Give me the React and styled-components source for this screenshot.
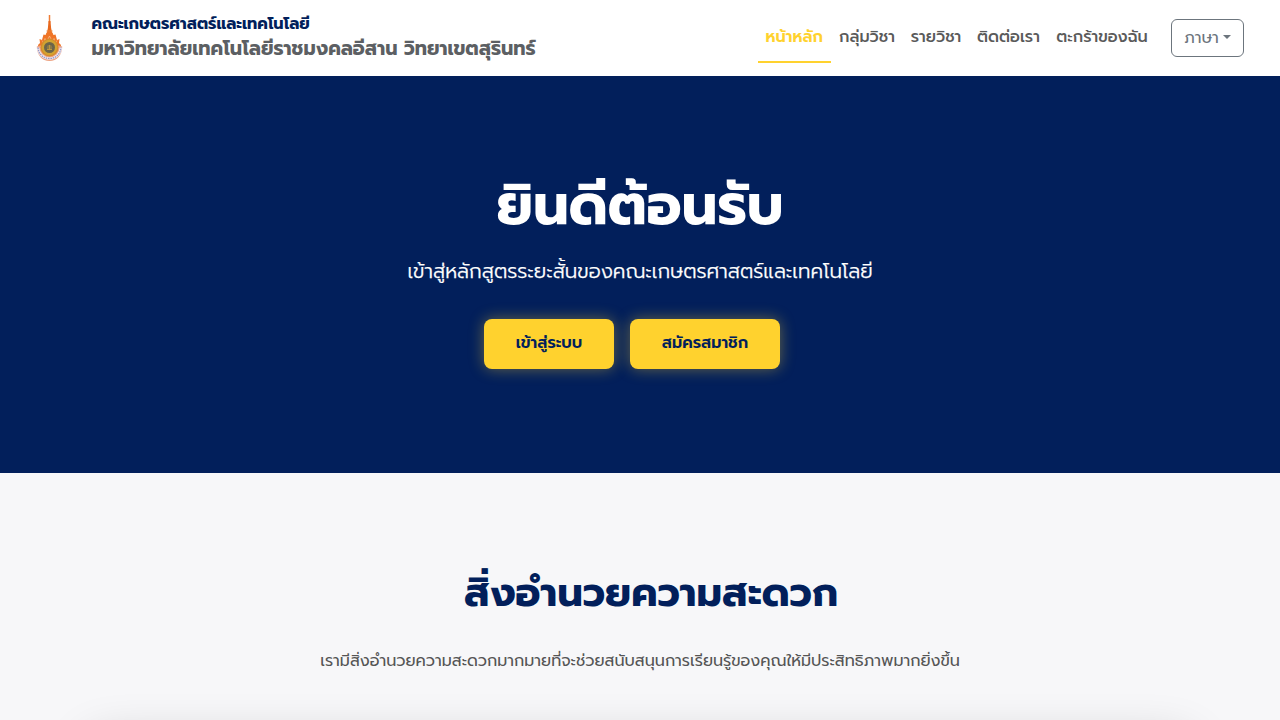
import React from "react";
import styled, { createGlobalStyle } from "styled-components";

const GlobalStyle = createGlobalStyle`
  * { box-sizing: border-box; }
  html, body { margin: 0; height: 720px; overflow: hidden; }
  body { font-family: Prompt, Kanit, "Noto Sans Thai", "Noto Sans", "Liberation Sans", sans-serif; background: #f7f7f9; }
  h1, h2, p { margin: 0; }
`;

const Page = styled.div`
  width: 1280px;
  height: 720px;
  overflow: hidden;
`;

const Header = styled.header`
  height: 76px;
  padding: 0 36px;
  display: flex;
  justify-content: space-between;
  background: #fff;
`;

const Brand = styled.a`
  display: flex;
  padding-top: 13px;
`;

const Crest = styled.svg`
  width: 27px;
  height: 50px;
  margin-right: 28.6px;
`;

const BrandText = styled.div`
  display: flex;
  flex-direction: column;
  padding-top: 1px;
`;

const Text = styled.span`
  display: block;
  white-space: nowrap;
`;

const Faculty = styled(Text)`
  font-size: 16px;
  line-height: 20px;
  font-weight: 700;
  color: #021f5b;
`;

const University = styled(Text)`
  font-size: 19.2px;
  line-height: 29px;
  font-weight: 700;
  color: #5c5f63;
`;

const Nav = styled.nav`
  display: flex;
  align-items: flex-start;
`;

const NavLink = styled.a`
  width: ${(p) => p.$width}px;
  height: 50px;
  margin-top: 13px;
  display: flex;
  justify-content: center;
  font-size: 16px;
  line-height: 48px;
  font-weight: ${(p) => (p.$active ? 600 : 500)};
  color: ${(p) => (p.$active ? "#ffd22e" : "#5a5a5a")};
  border-bottom: 2px solid ${(p) => (p.$active ? "#ffd22e" : "transparent")};
`;

const LanguageButton = styled.button`
  width: 73px;
  height: 38px;
  margin: 19px 0 0 15px;
  padding: 0;
  display: flex;
  align-items: center;
  justify-content: center;
  gap: 4px;
  font-family: inherit;
  font-size: 16px;
  line-height: 24px;
  color: #6c757d;
  background: transparent;
  border: 1px solid #6c757d;
  border-radius: 6px;
`;

const Caret = styled.span`
  margin-bottom: 2px;
  border: 4px solid transparent;
  border-top-color: currentColor;
  border-bottom: 0;
`;

const Hero = styled.section`
  height: 397px;
  padding-top: 85px;
  display: flex;
  flex-direction: column;
  align-items: center;
  background: #021f5b;
`;

const HeroTitle = styled.h1`
  height: 90px;
  font-size: 56px;
  line-height: 90px;
  font-weight: 700;
  color: #fff;
`;

const HeroLead = styled.p`
  margin-top: 4px;
  height: 32px;
  font-size: 20px;
  line-height: 32px;
  font-weight: 300;
  color: #fff;
  -webkit-text-stroke: 0.25px #fff;
`;

const Actions = styled.div`
  display: flex;
  gap: 16px;
  margin: 32px 16px 0 0;
`;

const ActionButton = styled.button`
  width: ${(p) => p.$width}px;
  height: 50px;
  padding: 0 0 3px;
  display: flex;
  align-items: center;
  justify-content: center;
  font-family: inherit;
  font-size: 16px;
  font-weight: 600;
  color: #021f5b;
  background: #ffd22e;
  border: 0;
  border-radius: 8px;
  box-shadow: 0 0 15px rgba(255, 210, 46, 0.4);
`;

const Facilities = styled.section`
  padding-top: 85px;
  display: flex;
  flex-direction: column;
  align-items: center;
  background: #f7f7f9;
`;

const SectionTitle = styled.h2`
  margin-left: 22px;
  height: 70px;
  font-size: 40px;
  line-height: 70px;
  font-weight: 700;
  color: #021f5b;
`;

const SectionLead = styled.p`
  margin-top: 18px;
  height: 30px;
  font-size: 16px;
  line-height: 30px;
  color: #555;
`;

const Card = styled.div`
  width: 1104px;
  height: 300px;
  margin-top: 48px;
  border-radius: 16px;
  background: #fff;
  box-shadow: 0 16px 48px rgba(0, 0, 0, 0.2);
`;

const NAV = [
  { label: "หน้าหลัก", width: 73.5, active: true },
  { label: "กลุ่มวิชา", width: 72 },
  { label: "รายวิชา", width: 66 },
  { label: "ติดต่อเรา", width: 79 },
  { label: "ตะกร้าของฉัน", width: 108 },
];

function UniversityCrest() {
  return (
    <Crest viewBox="0 0 27 50">
      <path d="M13.5 2v8" stroke="#ef7d35" strokeWidth="1.5" />
      <path d="M12.500 8h2l.6 7 1.400 7h-6l1.400-7z" fill="#e8681d" />
      <path d="M10.500 18h6M10 21h7" stroke="#f08a3e" strokeWidth="1.2" />
      <path d="M2.500 35 2 32l2-2-.5-4L6 27l1.500-5.500L9.500 22l1.500-3h5l1.500 3 2-.5L21 27l2.500-1-.5 4 2 2-.5 3z" fill="#ef7527" />
      <path d="m6 27.500 1.500 3 1.500-5 1.500 3.500 3-6 3 6L18 25.500l1.500 5 1.500-3" fill="none" stroke="#fbd0a5" strokeWidth=".6" />
      <path d="M.8 33.500C.8 42 6 48 13.500 48s12.700-6 12.700-14.500l-3-1H4z" fill="#eda383" />
      <path d="M2 34.500c.5 6.500 5 11 11.500 11S24.500 41 25 34.500" fill="none" stroke="#f3eaf0" strokeWidth="2.600" />
      <path d="M2 34.500c.5 6.500 5 11 11.500 11S24.500 41 25 34.500" fill="none" stroke="#9698c4" strokeWidth="1.300" strokeDasharray="1.500 .8" />
      <circle cx="13.500" cy="34.500" r="9" fill="#d68a2b" />
      <circle cx="13.500" cy="34.500" r="7.700" fill="#d3a331" />
      <circle cx="13.500" cy="34.500" r="5.500" fill="#6d6549" />
      <circle cx="13.500" cy="34.500" r="3.300" fill="#8b7946" stroke="#555952" strokeWidth=".6" />
      <path d="M11 36.500h5M13.500 32v5" stroke="#c39b3e" strokeWidth=".9" />
    </Crest>
  );
}

export default function App() {
  return (
    <Page>
      <GlobalStyle />
      <Header>
        <Brand>
          <UniversityCrest />
          <BrandText>
            <Faculty>คณะเกษตรศาสตร์และเทคโนโลยี</Faculty>
            <University>มหาวิทยาลัยเทคโนโลยีราชมงคลอีสาน วิทยาเขตสุรินทร์</University>
          </BrandText>
        </Brand>
        <Nav>
          {NAV.map((item) => (
            <NavLink key={item.label} $width={item.width} $active={item.active}>
              <Text>{item.label}</Text>
            </NavLink>
          ))}
          <LanguageButton>
            <Text>ภาษา</Text>
            <Caret />
          </LanguageButton>
        </Nav>
      </Header>
      <Hero>
        <HeroTitle><Text>ยินดีต้อนรับ</Text></HeroTitle>
        <HeroLead><Text>เข้าสู่หลักสูตรระยะสั้นของคณะเกษตรศาสตร์และเทคโนโลยี</Text></HeroLead>
        <Actions>
          <ActionButton $width={130}><Text>เข้าสู่ระบบ</Text></ActionButton>
          <ActionButton $width={150}><Text>สมัครสมาชิก</Text></ActionButton>
        </Actions>
      </Hero>
      <Facilities>
        <SectionTitle><Text>สิ่งอำนวยความสะดวก</Text></SectionTitle>
        <SectionLead><Text>เรามีสิ่งอำนวยความสะดวกมากมายที่จะช่วยสนับสนุนการเรียนรู้ของคุณให้มีประสิทธิภาพมากยิ่งขึ้น</Text></SectionLead>
        <Card />
      </Facilities>
    </Page>
  );
}
